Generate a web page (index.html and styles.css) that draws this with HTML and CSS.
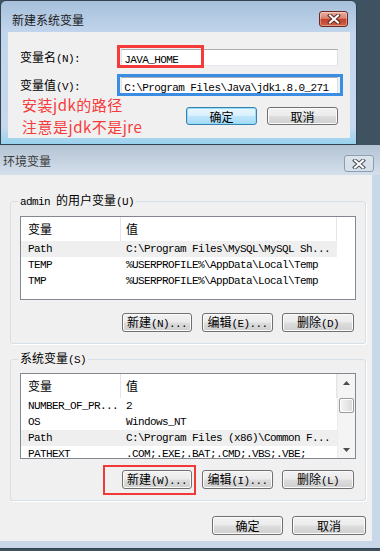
FILE: index.html
```html
<!DOCTYPE html>
<html lang="zh-CN">
<head>
<meta charset="utf-8">
<title>环境变量</title>
<link rel="stylesheet" href="styles.css">
</head>
<body>
<div class="top">
  <div class="dlg1">
    <div class="tb1">
      <span class="t1">新建系统变量</span>
      <span class="xbtn xred">
        <svg width="14" height="10" viewBox="0 0 14 10"><path d="M3 1.5 L11 8.5 M11 1.5 L3 8.5" stroke="#5a2a22" stroke-width="4" stroke-linecap="square"/><path d="M3 1.5 L11 8.5 M11 1.5 L3 8.5" stroke="#ffffff" stroke-width="2" stroke-linecap="square"/></svg>
      </span>
    </div>
    <div class="b1">
      <div class="frow">
        <label>变量名<span class="m">(N):</span></label>
        <div class="inp"><span class="m">JAVA_HOME</span><span class="mark mred"></span></div>
      </div>
      <div class="frow r2">
        <label>变量值<span class="m">(V):</span></label>
        <div class="inp"><span class="m">C:\Program Files\Java\jdk1.8.0_271</span><span class="mark mblue"></span></div>
      </div>
      <div class="foot1">
        <div class="note"><div>安装jdk的路径</div><div>注意是jdk不是jre</div></div>
        <div class="btns1">
          <button class="btn def">确定</button>
          <button class="btn">取消</button>
        </div>
      </div>
    </div>
  </div>
</div>
<div class="dlg2">
  <div class="tb2">
    <span class="t2">环境变量</span>
    <span class="xbtn xgrey">
      <svg width="14" height="10" viewBox="0 0 14 10"><path d="M3 1.5 L11 8.5 M11 1.5 L3 8.5" stroke="#4a4f57" stroke-width="4" stroke-linecap="square"/><path d="M3 1.5 L11 8.5 M11 1.5 L3 8.5" stroke="#ffffff" stroke-width="2" stroke-linecap="square"/></svg>
    </span>
  </div>
  <div class="b2">
    <fieldset class="grp">
      <legend><span class="m">admin </span>的用户变量<span class="m">(U)</span></legend>
      <div class="lv">
        <div class="main">
          <div class="hdr"><div class="c1">变量</div><div class="c2">值</div></div>
          <div class="row sel"><div class="c1 m">Path</div><div class="c2 m">C:\Program Files\MySQL\MySQL Sh...</div></div>
          <div class="row"><div class="c1 m">TEMP</div><div class="c2 m">%USERPROFILE%\AppData\Local\Temp</div></div>
          <div class="row"><div class="c1 m">TMP</div><div class="c2 m">%USERPROFILE%\AppData\Local\Temp</div></div>
        </div>
        <div class="sp"></div>
      </div>
      <div class="brow">
        <button class="btn w70">新建<span class="m">(N)...</span></button>
        <button class="btn w71">编辑<span class="m">(E)...</span></button>
        <button class="btn w72">删除<span class="m">(D)</span></button>
      </div>
    </fieldset>
    <fieldset class="grp g2">
      <legend>系统变量<span class="m">(S)</span></legend>
      <div class="lv tall">
        <div class="main">
          <div class="hdr"><div class="c1">变量</div><div class="c2">值</div></div>
          <div class="row"><div class="c1 m">NUMBER_OF_PR...</div><div class="c2 m">2</div></div>
          <div class="row"><div class="c1 m">OS</div><div class="c2 m">Windows_NT</div></div>
          <div class="row sel"><div class="c1 m">Path</div><div class="c2 m">C:\Program Files (x86)\Common F...</div></div>
          <div class="row"><div class="c1 m">PATHEXT</div><div class="c2 m">.COM;.EXE;.BAT;.CMD;.VBS;.VBE;</div></div>
        </div>
        <div class="sb">
          <div class="arr"><svg width="7" height="4" viewBox="0 0 7 4"><path d="M0 4 L3.5 0 L7 4 Z" fill="#4d4d4d"/></svg></div>
          <div class="thumb"></div>
          <div class="fill"></div>
          <div class="arr"><svg width="7" height="4" viewBox="0 0 7 4"><path d="M0 0 L3.5 4 L7 0 Z" fill="#4d4d4d"/></svg></div>
        </div>
      </div>
      <div class="brow b2row">
        <span class="hl"><button class="btn w70">新建<span class="m">(W)...</span></button><span class="mark mred2"></span></span>
        <button class="btn w71">编辑<span class="m">(I)...</span></button>
        <button class="btn w72">删除<span class="m">(L)</span></button>
      </div>
    </fieldset>
    <div class="bot">
      <button class="btn w71">确定</button>
      <button class="btn w74">取消</button>
    </div>
  </div>
</div>
</body>
</html>
```

FILE: styles.css
```css
* { box-sizing: border-box; }
html, body { margin: 0; }
body {
  width: 380px;
  height: 551px;
  overflow: hidden;
  background: #3e5262;
  font-family: "Noto Sans CJK SC", "Noto Sans", sans-serif;
  font-size: 12px;
  line-height: 16px;
  color: #000;
}
.m {
  font-family: "Liberation Mono", monospace;
  font-size: 11px;
  letter-spacing: -0.6px;
}

/* ---------- top dialog ---------- */
.top { display: flex; height: 145px; }
.dlg1 {
  width: 357px;
  height: 145px;
  border: 1px solid #34434f;
  border-radius: 6px 6px 0 0;
  background: linear-gradient(#a7c0db, #c1d5ec 22%, #c6d9ee 88%, #98d2ee);
  padding: 0 6px 6px 7px;
  display: flex;
  flex-direction: column;
}
.tb1 {
  height: 31px;
  display: flex;
  align-items: flex-start;
  justify-content: space-between;
  padding: 10px 2px 0 4px;
}
.t1 { line-height: 18px; color: #1a1a1a; }
.xbtn {
  display: flex;
  align-items: center;
  justify-content: center;
  border-radius: 3px;
}
.xred {
  width: 29px;
  height: 16px;
  border: 1px solid #6d2a22;
  background: linear-gradient(#eab0a3, #d98470 45%, #c3412a 52%, #cf6448);
  box-shadow: inset 0 0 0 1px rgba(255,255,255,0.35);
}
.b1 {
  height: 106px;
  background: #f0f0f0;
  padding: 17px 12px 0 12px;
  overflow: hidden;
}
.frow { display: flex; align-items: center; height: 17px; }
.frow label { width: 102px; line-height: 17px; }
.inp {
  position: relative;
  width: 218px;
  height: 17px;
  background: #fff;
  border: 1px solid;
  border-color: #abadb3 #dbdfe6 #e3e9ef #e2e3ea;
  padding-left: 2px;
  line-height: 15px;
}
.r2 { margin-top: 11px; }
.mark { position: absolute; pointer-events: none; }
.mred { left: -5px; top: -5px; width: 87px; height: 23px; border: 3px solid #f53a3a; }
.mblue { left: -5px; top: -4px; right: -6px; bottom: -3px; border: 3px solid #3b8de4; }
.foot1 { display: flex; justify-content: space-between; }
.note {
  color: #f53c3c;
  font-size: 15px;
  letter-spacing: 0.5px;
  line-height: 22px;
  margin-left: 2px;
}
.btns1 { display: flex; gap: 10px; margin-top: 13px; }
.btns1 .btn { width: 71px; height: 18px; }

/* ---------- buttons ---------- */
.btn {
  height: 19px;
  padding: 0;
  border: 1px solid #707070;
  border-radius: 3px;
  background: linear-gradient(#f2f2f2, #ebebeb 48%, #dddddd 52%, #cfcfcf);
  box-shadow: inset 0 0 0 1px #fbfbfb;
  font-family: "Noto Sans CJK SC", sans-serif;
  font-size: 12px;
  line-height: 15px;
  color: #000;
  white-space: nowrap;
}
.btn.def {
  border-color: #3c7fb1;
  background: linear-gradient(#eaf6fd, #d9f0fc 48%, #bee6fd 52%, #a7d9f5);
  box-shadow: inset 0 0 0 1px #8fe0f7;
}
.w70 { width: 70px; }
.w71 { width: 71px; }
.w72 { width: 72px; }
.w74 { width: 74px; }

/* ---------- environment dialog ---------- */
.dlg2 {
  width: 380px;
  height: 404px;
  background: #c9d8e8;
  border-bottom: 1px solid #34434f;
  display: flex;
  flex-direction: column;
}
.tb2 {
  height: 30px;
  background: linear-gradient(#b4c3d3, #d4e0ec);
  display: flex;
  justify-content: space-between;
  align-items: flex-start;
  padding: 7px 6px 0 3px;
}
.t2 { line-height: 18px; color: #3c3c3c; }
.xgrey {
  margin-top: 3px;
  width: 30px;
  height: 17px;
  border: 1px solid #8d9db2;
  background: linear-gradient(rgba(255,255,255,0.45), rgba(255,255,255,0.1));
}
.b2 {
  width: 372px;
  height: 366px;
  background: #f0f0f0;
  padding: 17px 6px 0 10px;
}
.grp {
  margin: 0;
  min-width: 0;
  border: 1px solid #d5dfe5;
  border-radius: 3px;
  box-shadow: 1px 1px 0 #ffffff;
  padding: 6px 9px 11px 9px;
}
.grp legend { padding: 0 2px; margin-left: -2px; line-height: 16px; }
.g2 { margin-top: 6px; padding-top: 5px; }

.lv {
  height: 84px;
  border: 1px solid #828790;
  background: #fff;
  display: flex;
  overflow: hidden;
}
.lv.tall { height: 86px; }
.main { width: 316px; }
.hdr { height: 24px; display: flex; line-height: 24px; }
.hdr .c1 { width: 100px; padding-left: 7px; border-right: 1px solid #e5e5e5; }
.hdr .c2 { width: 216px; padding-left: 5px; border-right: 1px solid #e5e5e5; }
.row { display: flex; height: 16px; line-height: 16px; white-space: nowrap; }
.row .c1 { width: 100px; padding-left: 7px; }
.row .c2 { width: 216px; padding-left: 5px; overflow: hidden; }
.row.sel { background: #efefef; }
.sp { width: 18px; }
.sb {
  width: 18px;
  background: #f4f4f4;
  border-left: 1px solid #ececec;
  display: flex;
  flex-direction: column;
}
.arr { height: 17px; display: flex; align-items: center; justify-content: center; }
.thumb {
  margin: 7px 1px 0 1px;
  height: 15px;
  border: 1px solid #9a9a9a;
  border-radius: 2px;
  background: linear-gradient(90deg, #f4f4f4, #e8e8e8 50%, #d8d8d8);
  box-shadow: inset 0 0 0 1px #fdfdfd;
}
.fill { flex: 1; }

.brow {
  display: flex;
  justify-content: flex-end;
  gap: 9px;
  margin-top: 13px;
  padding-right: 2px;
}
.brow .w70 { margin-right: 1px; }
.b2row { margin-top: 11px; }
.hl { position: relative; display: flex; }
.mred2 { left: -19px; top: -5px; right: -3px; bottom: -6px; border: 2px solid #f03a3a; }

.bot {
  display: flex;
  justify-content: flex-end;
  gap: 9px;
  margin-top: 15px;
}
```
